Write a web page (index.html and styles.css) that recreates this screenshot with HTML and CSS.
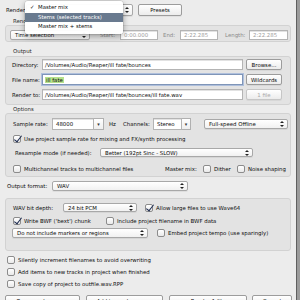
FILE: index.html
```html
<!DOCTYPE html>
<html lang="en">
  <head>
    <meta charset="UTF-8" />
    <meta name="viewport" content="width=device-width, initial-scale=1.0" />
    <title>Render to File</title>
    <link rel="stylesheet" href="styles.css">
  </head>
  <body>
    <div class="window">
      <!-- Source selector with its popup menu open -->
      <div class="row top-row">
        <span class="lbl w-render">Render</span>
        <div class="popup render-src"><span class="arrows"></span></div>
        <div class="btn presets">Presets</div>
        <ul class="menu">
          <li><span class="tick">✓</span>Master mix</li>
          <li class="hl">Stems (selected tracks)</li>
          <li>Master mix + stems</li>
        </ul>
      </div>

      <div class="group-title t-render">Render</div>
      <div class="group g-render">
        <div class="row r10">
          <div class="popup time-sel">Time selection<span class="arrows"></span></div>
          <span class="lbl w-start">Start:</span>
          <div class="field ghost w-time">0:00.000</div>
          <span class="lbl w-end">End:</span>
          <div class="field ghost w-time">2:22.285</div>
          <span class="lbl w-length">Length:</span>
          <div class="field ghost w-time2">2:22.285</div>
        </div>
      </div>

      <div class="group-title t-output">Output</div>
      <div class="group g-output">
        <div class="row r11">
          <span class="lbl w-out">Directory:</span>
          <div class="field w-path">/Volumes/Audio/Reaper/ill fate/bounces</div>
          <div class="btn side-btn">Browse...</div>
        </div>
        <div class="row r11">
          <span class="lbl w-out">File name:</span>
          <div class="field w-path focused"><span class="sel">ill fate</span></div>
          <div class="btn side-btn">Wildcards</div>
        </div>
        <div class="row r11">
          <span class="lbl w-out">Render to:</span>
          <div class="field w-path">/Volumes/Audio/Reaper/ill fate/bounces/ill fate.wav</div>
          <div class="btn side-btn disabled">1 file</div>
        </div>
      </div>

      <div class="group-title t-options">Options</div>
      <div class="group g-options">
        <div class="row r12">
          <span class="lbl w-rate">Sample rate:</span>
          <div class="field w-rate-f">48000</div>
          <div class="drop w-drop">▾</div>
          <span class="lbl w-hz">Hz</span>
          <span class="lbl w-chan">Channels:</span>
          <div class="field w-stereo">Stereo</div>
          <div class="drop w-drop2">▾</div>
          <div class="popup w-speed">Full-speed Offline<span class="arrows"></span></div>
        </div>
        <div class="row r9 gap4">
          <span class="check on"></span>
          <span class="ctext">Use project sample rate for mixing and FX/synth processing</span>
        </div>
        <div class="row r9 gap5">
          <span class="lbl w-resample">Resample mode (if needed):</span>
          <div class="popup w-resample-sel">Better (192pt Sinc - SLOW)<span class="arrows"></span></div>
        </div>
        <div class="row r8 gap8">
          <div class="cpair w-multi">
            <span class="check"></span>
            <span class="ctext">Multichannel tracks to multichannel files</span>
          </div>
          <span class="lbl w-master">Master mix:</span>
          <span class="check"></span>
          <span class="ctext w-dither">Dither</span>
          <span class="check"></span>
          <span class="ctext">Noise shaping</span>
        </div>
      </div>

      <div class="row r10 format-row">
        <span class="lbl w-format">Output format:</span>
        <div class="popup w-format-sel">WAV<span class="arrows"></span></div>
      </div>

      <div class="group g-wav">
        <div class="row r9">
          <span class="lbl w-depth">WAV bit depth:</span>
          <div class="popup w-depth-sel">24 bit PCM<span class="arrows"></span></div>
          <span class="check on ml8"></span>
          <span class="ctext">Allow large files to use Wave64</span>
        </div>
        <div class="row r8 gap5">
          <div class="cpair w-bwf">
            <span class="check on"></span>
            <span class="ctext">Write BWF ('bext') chunk</span>
          </div>
          <span class="check"></span>
          <span class="ctext">Include project filename in BWF data</span>
        </div>
        <div class="row r10 gap3">
          <div class="popup w-markers">Do not include markers or regions<span class="arrows"></span></div>
          <span class="check ml9"></span>
          <span class="ctext">Embed project tempo (use sparingly)</span>
        </div>
      </div>

      <div class="extras">
        <div class="row r12"><span class="check"></span><span class="ctext">Silently increment filenames to avoid overwriting</span></div>
        <div class="row r12"><span class="check"></span><span class="ctext">Add items to new tracks in project when finished</span></div>
        <div class="row r12"><span class="check"></span><span class="ctext">Save copy of project to outfile.wav.RPP</span></div>
      </div>

      <div class="row actions">
        <div class="btn w-queue">Open render queue</div>
        <div class="btn w-add">Add to render queue</div>
        <div class="btn w-go">Render 1 file</div>
        <div class="btn w-cancel">Cancel</div>
      </div>
    </div>
  </body>
</html>
```

FILE: styles.css
```css
/* Reset */
* {
  margin: 0;
  padding: 0;
  box-sizing: border-box;
}

body {
  width: 300px;
  height: 300px;
  overflow: hidden;
  background: #9b9b9b;
  font-family: 'DejaVu Sans', sans-serif;
  font-size: 5.4px;
  color: #0d0d0d;
}

.window {
  position: relative;
  width: 297px;
  height: 300px;
  background: #ececec;
  border-right: 1px solid #5f5f5f;
  padding-top: 3px;
}

.row {
  display: flex;
  align-items: center;
}

.r8 { height: 8px; }
.r9 { height: 9px; }
.r10 { height: 10px; }
.r11 { height: 11px; }
.r12 { height: 12px; }
.gap3 { margin-top: 3px; }
.gap4 { margin-top: 4px; }
.gap5 { margin-top: 5px; }
.gap8 { margin-top: 8px; }
.ml8 { margin-left: 8px; }
.ml9 { margin-left: 9px; }

.lbl {
  white-space: nowrap;
}

/* Controls */
.field {
  height: 100%;
  background: #fff;
  border: 1px solid #b4b4b4;
  box-shadow: inset 0 1px 0 #e2e2e2;
  padding-left: 3px;
  display: flex;
  align-items: center;
  white-space: nowrap;
  overflow: hidden;
}

.field.ghost {
  color: #9d9d9d;
}

.field.focused {
  border-color: #7f95b8;
  box-shadow: 0 0 0 1px #aebfdc;
}

.sel {
  background: #b6e28c;
  padding: 0 1px;
}

.popup {
  position: relative;
  height: 100%;
  background: linear-gradient(#ffffff, #f1f1f1);
  border: 1px solid #a8a8a8;
  border-radius: 2px;
  box-shadow: 0 1px 0 rgba(0, 0, 0, 0.06);
  padding-left: 4px;
  display: flex;
  align-items: center;
  white-space: nowrap;
}

.arrows {
  position: absolute;
  right: 3px;
  top: 50%;
  width: 4px;
  height: 6px;
  margin-top: -3px;
}

.arrows::before,
.arrows::after {
  content: '';
  position: absolute;
  left: 0;
  border-left: 2px solid transparent;
  border-right: 2px solid transparent;
}

.arrows::before {
  top: 0;
  border-bottom: 2px solid #222;
}

.arrows::after {
  bottom: 0;
  border-top: 2px solid #222;
}

.drop {
  height: 100%;
  background: linear-gradient(#ffffff, #eeeeee);
  border: 1px solid #b0b0b0;
  border-left: none;
  display: flex;
  align-items: center;
  justify-content: center;
  font-size: 5px;
  color: #333;
}

.btn {
  height: 100%;
  background: linear-gradient(#ffffff, #ececec);
  border: 1px solid #9c9c9c;
  border-radius: 2px;
  box-shadow: 0 1px 0 rgba(0, 0, 0, 0.05);
  display: flex;
  align-items: center;
  justify-content: center;
  white-space: nowrap;
}

.btn.disabled {
  color: #a9a9a9;
  border-color: #c6c6c6;
}

.check {
  position: relative;
  flex: none;
  width: 8px;
  height: 8px;
  background: linear-gradient(#ffffff, #e9e9e9);
  border: 1px solid #8c8c8c;
  border-radius: 2px;
}

.check.on::after {
  content: '';
  position: absolute;
  left: 1.5px;
  top: -2px;
  width: 3px;
  height: 7px;
  border-right: 1.8px solid #1f2d52;
  border-bottom: 1.8px solid #1f2d52;
  transform: rotate(38deg);
}

.ctext {
  margin-left: 3px;
  white-space: nowrap;
}

.cpair {
  display: flex;
  align-items: center;
}

/* Groups */
.group-title {
  padding-left: 13px;
  line-height: 8px;
  height: 8px;
  color: #2a2a2a;
}

.group {
  margin: 0 5px;
  background: #e3e3e3;
  border: 1px solid #d2d2d2;
  border-radius: 3px;
}

/* Top row and menu */
.top-row {
  height: 13px;
  padding: 1px 0 0 6px;
}

.w-render { width: 20px; }
.render-src { width: 107px; }
.presets { width: 44px; margin-left: 5px; }

.menu {
  position: absolute;
  left: 25px;
  top: 1px;
  width: 98px;
  padding: 2px 0;
  list-style: none;
  background: rgba(255, 255, 255, 0.97);
  border-radius: 3px;
  box-shadow: 0 2px 6px rgba(0, 0, 0, 0.35), 0 0 0 0.5px rgba(0, 0, 0, 0.15);
  z-index: 2;
}

.menu li {
  height: 9.5px;
  line-height: 9.5px;
  padding-left: 13px;
  position: relative;
}

.menu li.hl {
  background: #697a8f;
  color: #fff;
}

.tick {
  position: absolute;
  left: 5px;
}

/* Render range */
.t-render { margin-top: 0; height: 9px; line-height: 10px; }
.g-render { padding: 4px 0 1px 4px; }
.time-sel { width: 80px; }
.w-start { width: 20px; margin-left: 10px; color: #8a8a8a; }
.w-end { width: 17px; margin-left: 5px; color: #8a8a8a; }
.w-length { width: 24px; margin-left: 7px; color: #8a8a8a; }
.w-time { width: 38px; }
.w-time2 { width: 39px; }

/* Output */
.t-output { height: 14px; line-height: 9px; padding-top: 5px; }
.g-output {
  padding: 2px 0 4px 6px;
  display: flex;
  flex-direction: column;
  gap: 4px;
}
.w-out { width: 30px; }
.w-path { width: 201px; padding-left: 2px; }
.side-btn { width: 36px; margin-left: 3px; }

/* Options */
.t-options { height: 8px; line-height: 8px; }
.g-options { padding: 4px 0 3px 7px; }
.w-rate { width: 39px; }
.w-rate-f { width: 42px; }
.w-drop { width: 10px; }
.w-hz { width: 14px; margin-left: 5px; }
.w-chan { width: 30px; }
.w-stereo { width: 29px; }
.w-drop2 { width: 9px; }
.w-speed { width: 84px; margin-left: 13px; height: 10px; }
.w-resample { width: 85px; margin-left: 2px; }
.w-resample-sel { width: 153px; }
.w-multi { width: 152px; }
.w-master { width: 38px; }
.w-dither { width: 20px; margin-right: 3px; }

/* Format */
.format-row { margin-top: 4px; padding-left: 7px; }
.w-format { width: 45px; }
.w-format-sel { width: 136px; }

.g-wav { margin-top: 7px; padding: 4px 0 12px 7px; }
.w-depth { width: 50px; }
.w-depth-sel { width: 74px; }
.w-bwf { width: 93px; }
.w-markers { width: 136px; margin-left: -1px; }

/* Extra options */
.extras { margin-top: 3px; padding-left: 7px; }

.actions {
  height: 12px;
  margin-top: 5px;
  padding-left: 5px;
}

.w-queue { width: 75px; }
.w-add { width: 77px; margin-left: 6px; }
.w-go { width: 78px; margin-left: 6px; }
.w-cancel { width: 40px; margin-left: 5px; }
```
